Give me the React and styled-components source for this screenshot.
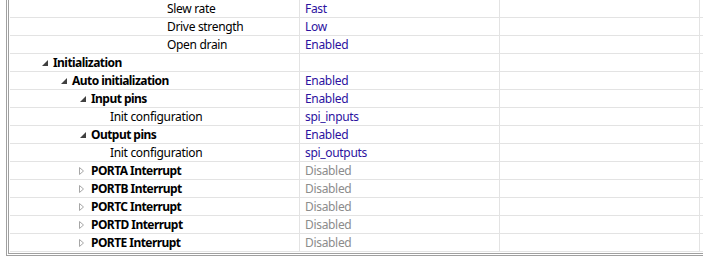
import React from 'react';
import styled, { createGlobalStyle } from 'styled-components';

const GlobalStyle = createGlobalStyle`
  html, body {
    margin: 0;
    padding: 0;
    background: #ffffff;
  }
  body {
    font-family: "Noto Sans", "Open Sans", sans-serif;
    font-size: 12px;
  }
`

const Frame = styled.div`
  width: 697px;
  height: 256px;
  margin-left: 6px;
  box-sizing: border-box;
  border-left: 3px double #a0a0a0;
  border-bottom: 3px double #a0a0a0;
  padding: 0 0 1px 1px;
  overflow: hidden;
  background: #ffffff;
`

const Row = styled.div`
  display: grid;
  grid-template-columns: 290px 200px 200px 1fr;
  height: 18px;
`

const Cell = styled.div`
  box-sizing: border-box;
  height: 18px;
  border-bottom: 1px solid #e3e3e3;
  border-right: ${p => (p.$last ? 'none' : '1px solid #e3e3e3')};
  display: flex;
  align-items: center;
  white-space: nowrap;
  overflow: hidden;
`

const NameCell = styled(Cell)`
  padding-left: ${p => 9 + p.$level * 19}px;
`

const Toggle = styled.span`
  width: 15px;
  height: 17px;
  flex: 0 0 15px;
  display: flex;
  align-items: center;
`

const Label = styled.span`
  font-weight: ${p => (p.$bold ? 700 : 400)};
  color: #000000;
  line-height: 17px;
  letter-spacing: ${p => (p.$bold ? '-0.55px' : '-0.32px')};
`

const ValueCell = styled(Cell)`
  padding-left: 5px;
`

const Value = styled.span`
  color: ${p => (p.$off ? '#8c8c8c' : '#2c12a0')};
  line-height: 17px;
  letter-spacing: -0.32px;
`

function Arrow({ open }) {
  if (open) {
    return (
      <svg width="6" height="6" viewBox="0 0 6 6" style={{ marginLeft: 4, marginTop: 1 }}>
        <polygon points="6,0 6,6 0,6" fill="#404040" />
      </svg>
    )
  }
  return (
    <svg width="5" height="8" viewBox="0 0 5 8" style={{ marginLeft: 3, marginTop: 1 }}>
      <polygon points="0.5,0.5 4.5,4 0.5,7.5" fill="none" stroke="#a6a6a6" strokeWidth="1" />
    </svg>
  )
}

const rows = [
  { name: 'Slew rate', level: 7, value: 'Fast' },
  { name: 'Drive strength', level: 7, value: 'Low' },
  { name: 'Open drain', level: 7, value: 'Enabled' },
  { name: 'Initialization', level: 1, bold: true, arrow: 'open', value: '' },
  { name: 'Auto initialization', level: 2, bold: true, arrow: 'open', value: 'Enabled' },
  { name: 'Input pins', level: 3, bold: true, arrow: 'open', value: 'Enabled' },
  { name: 'Init configuration', level: 4, value: 'spi_inputs' },
  { name: 'Output pins', level: 3, bold: true, arrow: 'open', value: 'Enabled' },
  { name: 'Init configuration', level: 4, value: 'spi_outputs' },
  { name: 'PORTA Interrupt', level: 3, bold: true, arrow: 'closed', value: 'Disabled', off: true },
  { name: 'PORTB Interrupt', level: 3, bold: true, arrow: 'closed', value: 'Disabled', off: true },
  { name: 'PORTC Interrupt', level: 3, bold: true, arrow: 'closed', value: 'Disabled', off: true },
  { name: 'PORTD Interrupt', level: 3, bold: true, arrow: 'closed', value: 'Disabled', off: true },
  { name: 'PORTE Interrupt', level: 3, bold: true, arrow: 'closed', value: 'Disabled', off: true },
]

export default function App() {
  return (
    <>
      <GlobalStyle />
      <Frame>
        {rows.map((r, i) => (
          <Row key={'row-' + i}>
            <NameCell $level={r.level}>
              <Toggle>{r.arrow ? <Arrow open={r.arrow === 'open'} /> : null}</Toggle>
              <Label $bold={r.bold}>{r.name}</Label>
            </NameCell>
            <ValueCell>
              <Value $off={r.off}>{r.value}</Value>
            </ValueCell>
            <Cell />
            <Cell $last />
          </Row>
        ))}
      </Frame>
    </>
  )
}
